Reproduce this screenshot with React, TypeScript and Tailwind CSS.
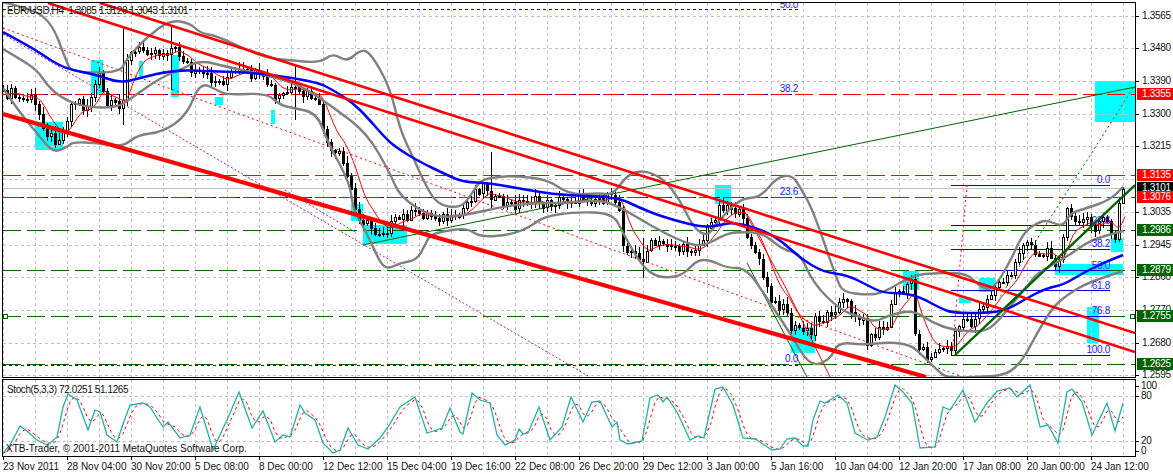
const P = (s: string) => s.trim().split(/\s+/).map((p) => p.split(',').map(Number));
const toPath = (pts: number[][]) => 'M' + pts.map((p) => p.join(' ')).join('L');
// rounded curve through the midpoints, for the moving averages and bands
const toCurve = (pts: number[][]) => {
  let d = `M${pts[0][0]} ${pts[0][1]}`;
  for (let i = 1; i < pts.length - 1; i++) {
    const mx = (pts[i][0] + pts[i + 1][0]) / 2;
    const my = (pts[i][1] + pts[i + 1][1]) / 2;
    d += `Q${pts[i][0]} ${pts[i][1]} ${mx} ${my}`;
  }
  const last = pts[pts.length - 1];
  return d + `L${last[0]} ${last[1]}`;
};

const interp = (pts: number[][], x: number) => {
  if (x <= pts[0][0]) return pts[0][1];
  for (let i = 1; i < pts.length; i++) {
    if (x <= pts[i][0]) {
      const [x0, y0] = pts[i - 1];
      const [x1, y1] = pts[i];
      return y0 + ((y1 - y0) * (x - x0)) / (x1 - x0);
    }
  }
  return pts[pts.length - 1][1];
};
const rnd = (i: number) => {
  const v = Math.sin(i * 12.9898) * 43758.5453;
  return v - Math.floor(v);
};

// price path, traced from the chart (page px)
const closeTrace = P(`3,95 10,92 20,100 30,97 40,115 48,135 55,138 62,135 70,105 78,100 85,110 95,85 100,75 105,105 115,105 122,112 125,60 130,55
140,50 150,48 160,53 170,48 175,50 185,60 190,72 200,75 210,78 220,82 230,75 240,72 255,75 270,85 275,100 290,90 300,95 310,95 318,105 325,135 330,155 340,155
350,185 355,210 365,222 375,232 385,230 395,222 405,215 420,213 430,215 445,218 455,222 465,205 475,190 485,185 495,200 510,205 530,200 545,205 560,200 580,198
600,198 618,200 622,240 630,250 640,262 650,245 660,245 670,242 680,250 690,248 700,245 710,225 720,205 730,205 740,215 750,240 760,265 770,300 775,305 783,303
792,330 800,328 812,335 815,317 820,317 823,320 828,313 835,307 840,302 843,302 848,305 855,313 860,320 866,322 867,340 872,338 875,333 880,327 887,327 890,310
895,290 905,293 912,277 915,330 919,350 923,343 927,358 932,353 937,353 943,347 948,350 952,352 955,330 960,327 965,310 970,327 975,323 980,308 985,308 988,290
993,290 997,283 1000,280 1007,277 1012,273 1015,267 1018,250 1023,240 1028,238 1035,257 1040,257 1043,255 1047,253 1057,263 1063,237 1067,213 1072,220 1080,220
1087,220 1092,227 1095,233 1100,218 1105,217 1112,233 1115,240 1120,197 1123,190`);

const longWicks: Record<number, number[]> = { 123: [28, 125], 171: [25, 90], 295: [66, 120], 491: [152, 208], 643: [238, 278] };

const bars = Array.from({ length: 281 }, (_, i) => {
  const x = 3 + 4 * i;
  return { x, close: interp(closeTrace, x) + (rnd(i) - 0.5) * 11 };
}).map((b, i, all) => {
  const open = i ? all[i - 1].close : b.close;
  const top = Math.min(open, b.close);
  const bottom = Math.max(open, b.close);
  const wick = longWicks[b.x];
  return {
    x: b.x,
    up: b.close < open,
    top: Math.round(top),
    h: Math.max(1, Math.round(bottom - top)),
    high: wick ? wick[0] : Math.round(top - 1 - rnd(i + 500) * 6),
    low: wick ? wick[1] : Math.round(bottom + 1 + rnd(i + 900) * 6),
  };
});

let ema = 95;
const redMa = bars.map((b) => {
  ema += (b.top + b.h / 2 - ema) * 0.3;
  return [b.x + 2, Math.round(ema * 10) / 10];
});

const bbUpper = P(`3,2 20,6 50,18 67,63 72,72 120,73 127,58 147,37 170,20 190,23 200,33 217,36 247,50 267,58 287,60 320,63 333,53 347,62 360,50 370,52 390,87 400,130
413,157 423,180 437,205 460,208 470,197 480,180 497,177 513,176 547,179 570,195 600,193 613,195 627,175 643,170 663,178 680,200 693,227 707,237 717,223 740,198 760,198
777,177 792,175 800,187 813,210 837,280 843,292 867,295 883,293 913,275 937,273 967,273 980,287 993,290 1010,262 1023,233 1037,223 1047,220 1063,227 1070,213 1087,208 1110,200 1123,187`);
const bbLower = P(`3,88 20,113 37,133 53,153 67,147 73,142 97,143 123,147 137,135 163,132 187,115 200,82 217,90 227,95 267,93 280,105 293,108 317,113 328,143 350,183 353,210
367,233 380,263 388,269 400,263 417,260 425,245 430,235 445,231 467,228 480,237 510,235 530,227 543,217 573,212 613,213 623,233 640,263 653,275 667,278 683,275 697,260
710,260 727,268 747,268 770,303 790,333 810,367 830,360 838,342 863,345 890,342 910,345 920,353 937,370 947,378 980,377 1007,375 1023,360 1037,333 1053,307 1067,295 1087,283 1123,271`);
const bbMiddle = P(`3,49 17,57 37,70 47,85 60,97 83,107 117,108 133,97 160,78 180,70 200,60 227,67 267,75 300,85 333,107 367,133 390,173 400,197 433,218 467,215 500,207 533,203 567,203
600,200 620,207 653,227 683,242 703,247 727,233 743,232 763,233 783,250 800,253 813,283 840,310 860,317 875,322 890,315 913,310 933,323 953,330 980,332 993,327 1013,303 1030,283
1037,273 1067,257 1090,240 1123,231`);
const maBlue = P(`3,32 33,48 50,60 67,69 97,75 120,83 140,78 173,70 207,71 260,73 317,82 333,90 353,103 367,117 387,140 400,150 420,162 447,175 463,182 490,183 527,190 560,195 617,197
640,208 663,217 700,227 717,226 733,222 763,230 783,242 800,258 823,272 847,275 867,285 883,293 903,293 920,297 940,308 953,313 987,313 1007,310 1027,298 1047,288 1063,285 1083,273 1103,263 1123,255`);

const stochMain = P(`3,453 10,445 20,426 28,432 37,440 47,445 50,443 57,437 63,407 68,394 77,400 88,430 95,410 100,412 107,435 117,442 122,427 130,405 143,403 150,407 157,418 163,427 168,422
180,438 190,435 200,407 213,450 227,420 239,392 252,428 263,411 275,442 283,435 290,437 300,405 305,413 315,420 323,443 333,453 340,450 348,428 358,445 368,449 380,438 388,427 400,407
415,397 427,433 442,428 450,408 460,432 463,434 472,393 480,400 490,403 497,435 505,445 515,440 519,429 523,434 528,433 539,407 550,440 562,427 571,397 583,422 592,402 600,401 612,427
617,422 620,440 628,444 642,441 650,398 658,395 663,402 667,397 677,412 690,440 698,436 704,438 715,389 723,387 733,405 743,438 755,439 772,450 780,449 787,439 795,438 803,446 808,446
813,420 820,401 825,403 838,395 847,403 855,433 862,437 868,440 877,437 885,417 895,385 903,392 912,403 920,448 935,447 943,407 950,410 963,390 975,422 987,403 997,391 1010,388 1017,397
1030,385 1040,427 1048,425 1058,443 1067,392 1072,389 1082,402 1092,435 1107,403 1115,431 1123,403`);
const stochSignal = Array.from({ length: 281 }, (_, i) => {
  const x = 3 + 4 * i;
  return [x, Math.round(((interp(stochMain, x) + interp(stochMain, x - 4) + interp(stochMain, x - 8)) / 3) * 10) / 10];
});

const cyanBoxes = P(`35,122,28,28 91,60,12,35 139,61,4,17 171,55,8,42 215,97,8,8 271,110,4,14 351,204,12,17 363,225,44,19 715,185,16,19 1095,81,40,41 791,327,24,26 903,271,16,19
959,297,12,6 979,278,16,14 1055,264,68,11 1087,307,12,36 1111,238,12,14`);

const gridXs = Array.from({ length: 36 }, (_, i) => 3 + 32 * i);
const gridYs = [16, 48, 81, 114, 146, 179, 212, 245, 277, 310, 343, 375];

const levels = [
  { y: 94.5, color: '#ff0000' },
  { y: 175.5, color: '#ff0000' },
  { y: 197.5, color: '#ff0000' },
  { y: 230.5, color: '#006400' },
  { y: 270.5, color: '#006400' },
  { y: 316.5, color: '#006400' },
  { y: 364.5, color: '#006400' },
];
const fibLevels = [9.5, 94.5, 197.5, 365.5];
const fibLines = [185.5, 225.5, 249.5, 270.5, 290.5, 316.5, 355.5];
const fibLabels = [
  { x: 798, y: 8, t: '50.0' },
  { x: 798, y: 92, t: '38.2' },
  { x: 798, y: 195, t: '23.6' },
  { x: 798, y: 362, t: '0.0' },
  { x: 1110, y: 183, t: '0.0' },
  { x: 1110, y: 224, t: '23.6' },
  { x: 1110, y: 247, t: '38.2' },
  { x: 1110, y: 269, t: '50.0' },
  { x: 1110, y: 289, t: '61.8' },
  { x: 1110, y: 314, t: '76.8' },
  { x: 1110, y: 353, t: '100.0' },
];

const priceTicks = [
  { y: 16, t: '1.3565' },
  { y: 48, t: '1.3480' },
  { y: 81, t: '1.3390' },
  { y: 114, t: '1.3300' },
  { y: 146, t: '1.3215' },
  { y: 212, t: '1.3035' },
  { y: 245, t: '1.2945' },
  { y: 277, t: '1.2860' },
  { y: 310, t: '1.2770' },
  { y: 343, t: '1.2680' },
  { y: 375, t: '1.2595' },
];
const priceTags = [
  { y: 94, t: '1.3355', bg: 'bg-[#ff0000]' },
  { y: 175, t: '1.3135', bg: 'bg-[#ff0000]' },
  { y: 188, t: '1.3101', bg: 'bg-black' },
  { y: 197, t: '1.3076', bg: 'bg-[#ff0000]' },
  { y: 230, t: '1.2986', bg: 'bg-[#006400]' },
  { y: 270, t: '1.2879', bg: 'bg-[#006400]' },
  { y: 316, t: '1.2755', bg: 'bg-[#006400]' },
  { y: 364, t: '1.2625', bg: 'bg-[#006400]' },
];
const stochTicks = [
  { y: 7, t: '100' },
  { y: 17, t: '80' },
  { y: 62, t: '20' },
  { y: 72, t: '0' },
];
const dates = ['23 Nov 2011', '28 Nov 04:00', '30 Nov 20:00', '5 Dec 08:00', '8 Dec 00:00', '12 Dec 12:00', '15 Dec 04:00', '19 Dec 16:00', '22 Dec 08:00', '26 Dec 20:00', '29 Dec 12:00', '3 Jan 00:00', '5 Jan 16:00', '10 Jan 04:00', '12 Jan 20:00', '17 Jan 08:00', '20 Jan 00:00', '24 Jan 12:00'];

function Grid({ ys, y0, y1 }: { ys: number[]; y0: number; y1: number }) {
  return (
    <g stroke="#c0c0c0" strokeWidth="1" strokeDasharray="3 3" shapeRendering="crispEdges">
      {gridXs.map((x) => (
        <line key={x} x1={x + 0.5} x2={x + 0.5} y1={y0} y2={y1} />
      ))}
      {ys.map((y) => (
        <line key={y} x1="3" x2="1135" y1={y + 0.5} y2={y + 0.5} />
      ))}
    </g>
  );
}

function MainChart() {
  return (
    <svg width="1132" height="374" viewBox="3 3 1132 374" className="block">
      {cyanBoxes.map(([x, y, w, h]) => (
        <rect key={`${x}-${y}`} x={x} y={y} width={w} height={h} fill="#00ffff" />
      ))}
      <Grid ys={gridYs} y0={3} y1={377} />
      <line x1="3" x2="1135" y1="188.5" y2="188.5" stroke="#c0c0c0" />
      {fibLevels.map((y) => (
        <line key={y} x1="3" x2="798" y1={y} y2={y} stroke="#0000cd" strokeDasharray="3 3" shapeRendering="crispEdges" />
      ))}
      {levels.map((l) => (
        <line key={l.y} x1="3" x2="1135" y1={l.y} y2={l.y} stroke={l.color} strokeDasharray="18 6" shapeRendering="crispEdges" />
      ))}
      {fibLines.map((y) => (
        <line key={y} x1="951" x2="1110" y1={y} y2={y} stroke="#0000cd" shapeRendering="crispEdges" />
      ))}
      <g shapeRendering="crispEdges">
        {bars.map((b) => (
          <g key={b.x}>
            <rect x={b.x} y={b.high} width="1" height={b.low - b.high} fill="#000" />
            <rect x={b.x - 0.5} y={b.top + 0.5} width="2" height={b.h} fill={b.up ? '#fff' : '#000'} stroke="#000" />
          </g>
        ))}
      </g>
      <g fill="none" strokeLinejoin="round">
        <path d={toPath([[3, 28], [963, 377]])} stroke="#ff0000" strokeDasharray="2 3" />
        <path d={toPath([[3, 34], [590, 377]])} stroke="#c71585" strokeDasharray="2 2" />
        <path d={toPath([[285, 190], [355, 232]])} stroke="#c71585" strokeDasharray="2 2" />
        <path d={toPath([[967, 185], [952, 354]])} stroke="#ff0000" strokeDasharray="2 3" />
        <path d={toPath([[1133, 88], [1000, 297]])} stroke="#006400" strokeDasharray="2 3" />
        <path d={toPath([[363, 245], [1135, 87]])} stroke="#006400" />
        <path d={toPath([[747, 263], [807, 377]])} stroke="#006400" />
        <path d={toPath(redMa)} stroke="#ff0000" />
        <path d={toPath([[745, 212], [787, 290], [830, 377]])} stroke="#ff0000" />
        <path d={toCurve(bbUpper)} stroke="#808080" strokeWidth="2.4" />
        <path d={toCurve(bbMiddle)} stroke="#808080" strokeWidth="2.4" />
        <path d={toCurve(bbLower)} stroke="#808080" strokeWidth="2.4" />
        <path d={toCurve(maBlue)} stroke="#0000ff" strokeWidth="2.5" />
        <path d={toPath([[48, 3], [1135, 352]])} stroke="#ff0000" strokeWidth="2.6" />
        <path d={toPath([[100, 3], [1135, 333]])} stroke="#ff0000" strokeWidth="2.6" />
        <path d={toPath([[3, 114], [926, 377]])} stroke="#ff0000" strokeWidth="4.2" />
        <path d={toPath([[955, 355], [1135, 185]])} stroke="#006400" strokeWidth="2.4" />
      </g>
      <rect x="3.5" y="314.5" width="4" height="4" fill="#fff" stroke="#006400" />
      <rect x="1130.5" y="314.5" width="4" height="4" fill="#fff" stroke="#006400" />
      <g className="text-[10px] tracking-[-0.3px]">
        {fibLabels.map((f) => (
          <text key={`${f.x}-${f.y}`} x={f.x} y={f.y} textAnchor="end" fill="#2020ff">
            {f.t}
          </text>
        ))}
      </g>
      <text x="7" y="14" fill="#111" xmlSpace="preserve" className="text-[10px] tracking-[-0.4px]">
        EUR/USD,H4  1.3085 1.3120 1.3043 1.3101
      </text>
    </svg>
  );
}

function StochChart() {
  return (
    <svg width="1132" height="76" viewBox="3 380 1132 76" className="block">
      <Grid ys={[396, 441]} y0={380} y1={456} />
      <path d={toPath(stochSignal)} fill="none" stroke="#ff0000" strokeDasharray="3 3" />
      <path d={toPath(stochMain)} fill="none" stroke="#20b2aa" strokeWidth="1.3" />
      <text x="7" y="393" fill="#111" className="text-[10px] tracking-[-0.4px]">
        Stoch(5,3,3) 72.0251 51.1265
      </text>
      <text x="6" y="452" fill="#111" className="text-[10px] tracking-normal">
        XTB-Trader, © 2001-2011 MetaQuotes Software Corp.
      </text>
    </svg>
  );
}

export default function App() {
  return (
    <div className="w-[1173px] h-[474px] overflow-hidden bg-white pt-[2px] pl-[2px] font-['Liberation_Sans',Arial,sans-serif] text-[10px] leading-3 text-[#111]">
      <div className="flex h-[376px] tracking-[-0.3px]">
        <div className="w-[1134px] border border-black">
          <MainChart />
        </div>
        <div className="relative flex-1">
          {priceTicks.map((p) => (
            <div key={p.t} className="absolute left-0 flex items-center gap-[3px]" style={{ top: p.y - 8 }}>
              <span className="h-px w-[3px] bg-black" />
              <span>{p.t}</span>
            </div>
          ))}
          {priceTags.map((p) => (
            <div key={p.t} className={`absolute left-px w-9 pl-[5px] text-white ${p.bg}`} style={{ top: p.y - 8 }}>
              {p.t}
            </div>
          ))}
        </div>
      </div>
      <div className="mt-px flex h-[78px] tracking-[-0.3px]">
        <div className="w-[1134px] border border-black">
          <StochChart />
        </div>
        <div className="relative flex-1">
          {stochTicks.map((p) => (
            <div key={p.t} className="absolute left-0 flex items-center gap-[2px]" style={{ top: p.y - 6 }}>
              <span className="h-px w-[3px] bg-black" />
              <span>{p.t}</span>
            </div>
          ))}
        </div>
      </div>
      <div className="flex pl-px">
        {dates.map((d) => (
          <div key={d} className="w-16 shrink-0">
            <div className="h-[3px] w-px bg-black" />
            <div className="whitespace-nowrap pt-px">{d}</div>
          </div>
        ))}
      </div>
    </div>
  );
}
